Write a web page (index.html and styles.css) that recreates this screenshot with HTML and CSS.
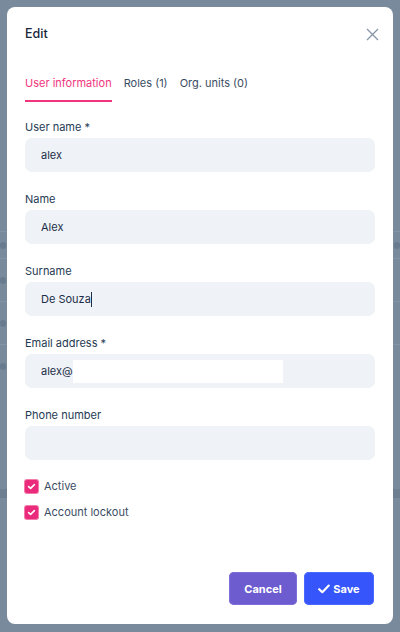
FILE: index.html
```html
<!DOCTYPE html>
<html lang="en">
<head>
<meta charset="utf-8">
<title>Edit user</title>
<link rel="stylesheet" href="styles.css">
</head>
<body>
<div class="backdrop">
  <div class="bg-row bg-head"><span class="bg-mark"></span><span class="bg-mark"></span></div>
  <div class="bg-row"><span class="bg-mark"></span></div>
  <div class="bg-row"><span class="bg-mark"></span></div>
  <div class="bg-row"><span class="bg-mark"></span></div>
  <div class="bg-band"></div>
</div>

<div class="modal">
  <div class="modal-header">
    <h2 class="title">Edit</h2>
    <button class="close" aria-label="Close">
      <svg width="13" height="13" viewBox="0 0 13 13"><path d="M1 1L12 12M12 1L1 12" stroke="#8796a6" stroke-width="1.3" fill="none"/></svg>
    </button>
  </div>
  <div class="tabs">
    <span class="tab active">User information</span>
    <span class="tab">Roles (1)</span>
    <span class="tab">Org. units (0)</span>
  </div>
  <form class="form">
    <label class="field">
      <span class="label">User name *</span>
      <span class="input">alex</span>
    </label>
    <label class="field">
      <span class="label">Name</span>
      <span class="input">Alex</span>
    </label>
    <label class="field">
      <span class="label">Surname</span>
      <span class="input">De Souza<span class="caret"></span></span>
    </label>
    <label class="field">
      <span class="label">Email address *</span>
      <span class="input">alex@<span class="redact"></span></span>
    </label>
    <label class="field">
      <span class="label">Phone number</span>
      <span class="input"></span>
    </label>
    <div class="checks">
      <div class="check"><span class="box"><svg width="9" height="9" viewBox="0 0 9 9"><path d="M1.6 4.6L3.6 6.4L7.4 2.6" stroke="#fff" stroke-width="1.6" fill="none" stroke-linecap="round" stroke-linejoin="round"/></svg></span>Active</div>
      <div class="check"><span class="box"><svg width="9" height="9" viewBox="0 0 9 9"><path d="M1.6 4.6L3.6 6.4L7.4 2.6" stroke="#fff" stroke-width="1.6" fill="none" stroke-linecap="round" stroke-linejoin="round"/></svg></span>Account lockout</div>
    </div>
  </form>
  <div class="footer">
    <button class="btn cancel">Cancel</button>
    <button class="btn save"><svg width="12" height="10" viewBox="0 0 12 10"><path d="M1.2 5.2L4.3 8.2L10.8 1.6" stroke="#fff" stroke-width="2.2" fill="none" stroke-linecap="round" stroke-linejoin="round"/></svg>Save</button>
  </div>
</div>
</body>
</html>
```
FILE: styles.css
```css
* { box-sizing: border-box; }
html, body { margin: 0; padding: 0; }
body {
  width: 400px;
  height: 632px;
  overflow: hidden;
  background: #788a9b;
  font-family: Inter, "Noto Sans", sans-serif;
  position: relative;
}
.backdrop {
  padding-top: 231px;
}
.bg-row {
  height: 43px;
  border-top: 1px solid #8394a4;
  display: flex;
  justify-content: space-between;
  align-items: center;
}
.bg-head { height: 27px; }
.bg-mark {
  width: 6px;
  height: 7px;
  border-radius: 3px;
  background: #62758a;
  opacity: 0.7;
}
.bg-band {
  margin-top: 102px;
  height: 9px;
  background: #6c7e8f;
}

.modal {
  position: absolute;
  left: 7px;
  top: 7px;
  width: 386px;
  height: 617px;
  background: #fff;
  border-radius: 8px;
  padding: 0 18px 19px 18px;
  display: flex;
  flex-direction: column;
}
.modal-header {
  display: flex;
  justify-content: space-between;
  align-items: flex-start;
  padding-top: 18px;
  height: 68px;
}
.title {
  margin: 0;
  font-size: 12.5px;
  line-height: 18px;
  font-weight: 500;
  color: #18253a;
}
.close {
  border: 0;
  background: none;
  padding: 0;
  margin: 3px -4px 0 0;
  width: 13px;
  height: 13px;
  display: flex;
}
.tabs {
  display: flex;
  gap: 12px;
}
.tab {
  font-size: 11px;
  line-height: 16px;
  padding-bottom: 9px;
  border-bottom: 2px solid transparent;
  color: #3b4d63;
}
.tab.active {
  color: #f0357d;
  border-bottom-color: #f0357d;
}
.form {
  margin: 17px 0 0 0;
  display: flex;
  flex-direction: column;
}
.field {
  display: flex;
  flex-direction: column;
  margin-bottom: 19px;
}
.label {
  font-size: 11px;
  line-height: 16px;
  color: #253a54;
  margin-bottom: 3px;
}
.input {
  height: 34px;
  background: #eff2f6;
  border-radius: 7px;
  padding: 0 16px;
  font-size: 11px;
  color: #1c2f4a;
  display: flex;
  align-items: center;
}
.caret {
  display: inline-block;
  width: 1px;
  height: 15px;
  background: #1c2f4a;
}
.redact {
  display: inline-block;
  width: 210px;
  height: 23px;
  background: #fff;
}
.checks {
  display: flex;
  flex-direction: column;
  gap: 13px;
  margin-top: 1px;
}
.check {
  display: flex;
  align-items: center;
  gap: 6px;
  font-size: 11px;
  line-height: 13px;
  color: #3b4d63;
}
.box {
  width: 13px;
  height: 13px;
  border-radius: 2px;
  background: #ea2a7b;
  display: flex;
  align-items: center;
  justify-content: center;
  box-shadow: 0 0 0 1px #f37aa9;
}
.footer {
  margin-top: auto;
  display: flex;
  justify-content: flex-end;
  gap: 7px;
  padding-right: 1px;
}
.btn {
  border: 0;
  height: 33px;
  border-radius: 5px;
  color: #fff;
  font-family: Inter, "Noto Sans", sans-serif;
  font-weight: 700;
  font-size: 11px;
  display: flex;
  align-items: center;
  justify-content: center;
  gap: 3px;
}
.cancel {
  width: 68px;
  background: #6c5ccf;
  box-shadow: inset 0 0 0 1px #7d6fd9;
}
.save {
  width: 70px;
  background: #3656fb;
  box-shadow: inset 0 0 0 1px #4c69ff;
}
```
